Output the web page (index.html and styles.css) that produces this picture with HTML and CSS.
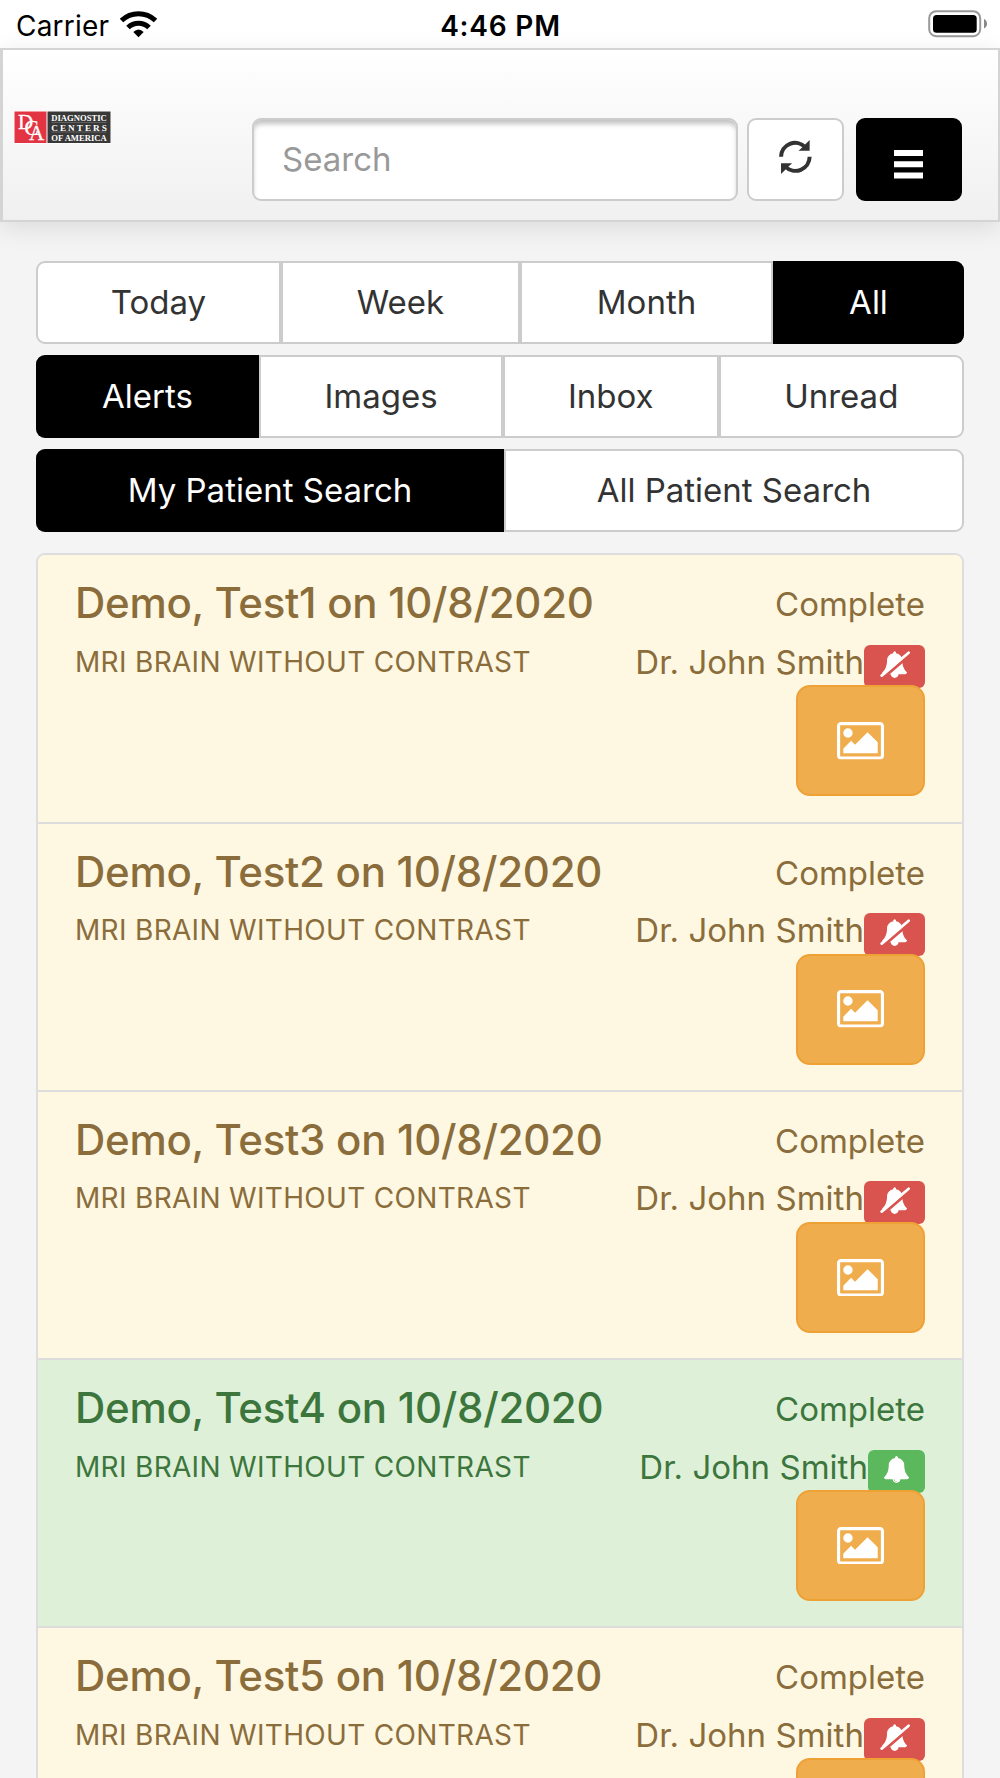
FILE: index.html
```html
<!DOCTYPE html>
<html lang="en">
<head>
<meta charset="utf-8">
<title>Patient Results</title>
<link rel="stylesheet" href="styles.css">
</head>
<body>
<svg class="sprite" aria-hidden="true">
  <symbol id="bell" viewBox="0 0 1792 1792"><path d="M912 1696q0-16-16-16-59 0-101.5-42.5t-42.5-101.5q0-16-16-16t-16 16q0 73 51.5 124.5t124.5 51.5q16 0 16-16zm816-288q0 52-38 90t-90 38h-448q0 106-75 181t-181 75-181-75-75-181h-448q-52 0-90-38t-38-90q50-42 91-88t85-119.5 74.5-158.5 50-206 19.5-260q0-152 117-282.5t307-158.5q-8-19-8-39 0-40 28-68t68-28 68 28 28 68q0 20-8 39 190 28 307 158.5t117 282.5q0 139 19.5 260t50 206 74.5 158.5 85 119.5 91 88z"/></symbol>
  <symbol id="image" viewBox="-64 128 1920 1536"><path d="M576 576q0 80-56 136t-136 56-136-56-56-136 56-136 136-56 136 56 56 136zm1024 384v448h-1408v-192l320-320 160 160 512-512zm96-704h-1600q-13 0-22.5 9.5t-9.5 22.5v1216q0 13 9.5 22.5t22.5 9.5h1600q13 0 22.5-9.5t9.5-22.5v-1216q0-13-9.5-22.5t-22.5-9.5zm160 32v1216q0 66-47 113t-113 47h-1600q-66 0-113-47t-47-113v-1216q0-66 47-113t113-47h1600q66 0 113 47t47 113z"/></symbol>
  <symbol id="bell-off" viewBox="0 0 90 82">
    <path transform="translate(4 1) scale(.0446)" d="M1728 1408q0 52-38 90t-90 38h-448q0 106-75 181t-181 75-181-75-75-181h-448q-52 0-90-38t-38-90q50-42 91-88t85-119.5 74.5-158.5 50-206 19.5-260q0-152 117-282.5t307-158.5q-8-19-8-39 0-40 28-68t68-28 68 28 28 68q0 20-8 39 190 28 307 158.5t117 282.5q0 139 19.5 260t50 206 74.5 158.5 85 119.5 91 88z"/>
    <path class="cut" d="M8 82 94 8"/>
    <path class="slash" d="M5 74 86 5"/>
  </symbol>
</svg>

<div class="status">
  <div class="carrier">Carrier
    <svg width="37" height="28" viewBox="0 0 37 28"><g fill="none" stroke="#000" stroke-width="5"><path d="M1.5 10.5a24.5 24.5 0 0 1 34 0"/><path d="M8 17.5a14.8 14.8 0 0 1 21 0"/></g><path d="M13.3 22q5.2-5 10.4 0l-5.2 5.2z"/></svg>
  </div>
  <div class="clock">4:46 PM</div>
  <svg class="battery" width="60" height="28" viewBox="0 0 60 28"><rect x="1.2" y="1.2" width="51" height="25" rx="7" fill="#fff" stroke="#999" stroke-width="2"/><rect x="5" y="5" width="43.7" height="17.8" rx="3.5"/><path d="M56 9q3 1.500 3 4.700t-3 4.700z" fill="#888"/></svg>
</div>

<header class="topbar">
  <svg class="logo" width="97" height="33" viewBox="0 0 97 33">
    <rect width="97" height="33" fill="#fff"/>
    <rect x=".5" y=".5" width="32" height="31.500" fill="#e23443"/>
    <rect x="33.500" y=".5" width="63" height="31.500" fill="#383838"/>
    <g class="logo-mark"><text x="4" y="18">D</text><text x="10.500" y="23.500">C</text><text x="15" y="28.500">A</text></g>
    <g class="logo-name"><text x="37.300" y="9.700" textLength="55.500" lengthAdjust="spacingAndGlyphs">DIAGNOSTIC</text><text x="37.300" y="19.500" textLength="55.500">CENTERS</text><text x="37.300" y="29.500" textLength="55.500" lengthAdjust="spacingAndGlyphs">OF AMERICA</text></g>
    <path d="M37.500 11.500h55M37.500 21h55" stroke="#888" stroke-width=".5"/>
  </svg>
  <input class="search" type="text" placeholder="Search">
  <button class="refresh" aria-label="Refresh"><svg width="33" height="34" viewBox="0 0 98 101"><g fill="none" stroke="#333" stroke-width="12"><path d="M6 50A42 42 0 0 1 78 21"/><path d="M91 50A42 42 0 0 1 19 79"/></g><path fill="#333" d="M91 0v32H58l10-9zM6 101V69h33L29 78z"/></svg></button>
  <button class="menu" aria-label="Menu"><svg width="29" height="29" viewBox="0 0 29 29"><path fill="#fff" d="M0 0h29v6H0zM0 11.200h29v6H0zM0 22.500h29v6H0z"/></svg></button>
</header>

<main>
  <nav class="group period"><button>Today</button><button>Week</button><button>Month</button><button class="on">All</button></nav>
  <nav class="group kind"><button class="on">Alerts</button><button>Images</button><button>Inbox</button><button>Unread</button></nav>
  <nav class="group scope"><button class="on">My Patient Search</button><button>All Patient Search</button></nav>

  <ul class="results">
    <li class="result">
      <div><h2>Demo, Test1 on 10/8/2020</h2><p class="exam">MRI BRAIN WITHOUT CONTRAST</p></div>
      <div class="side"><span class="state">Complete</span><div class="doctor">Dr. John Smith<span class="badge"><svg width="30" height="27.300"><use href="#bell-off"/></svg></span></div><button class="view" aria-label="View images"><svg width="47" height="37.600"><use href="#image"/></svg></button></div>
    </li>
    <li class="result">
      <div><h2>Demo, Test2 on 10/8/2020</h2><p class="exam">MRI BRAIN WITHOUT CONTRAST</p></div>
      <div class="side"><span class="state">Complete</span><div class="doctor">Dr. John Smith<span class="badge"><svg width="30" height="27.300"><use href="#bell-off"/></svg></span></div><button class="view" aria-label="View images"><svg width="47" height="37.600"><use href="#image"/></svg></button></div>
    </li>
    <li class="result">
      <div><h2>Demo, Test3 on 10/8/2020</h2><p class="exam">MRI BRAIN WITHOUT CONTRAST</p></div>
      <div class="side"><span class="state">Complete</span><div class="doctor">Dr. John Smith<span class="badge"><svg width="30" height="27.300"><use href="#bell-off"/></svg></span></div><button class="view" aria-label="View images"><svg width="47" height="37.600"><use href="#image"/></svg></button></div>
    </li>
    <li class="result read">
      <div><h2>Demo, Test4 on 10/8/2020</h2><p class="exam">MRI BRAIN WITHOUT CONTRAST</p></div>
      <div class="side"><span class="state">Complete</span><div class="doctor">Dr. John Smith<span class="badge"><svg width="27" height="27"><use href="#bell"/></svg></span></div><button class="view" aria-label="View images"><svg width="47" height="37.600"><use href="#image"/></svg></button></div>
    </li>
    <li class="result">
      <div><h2>Demo, Test5 on 10/8/2020</h2><p class="exam">MRI BRAIN WITHOUT CONTRAST</p></div>
      <div class="side"><span class="state">Complete</span><div class="doctor">Dr. John Smith<span class="badge"><svg width="30" height="27.300"><use href="#bell-off"/></svg></span></div><button class="view" aria-label="View images"><svg width="47" height="37.600"><use href="#image"/></svg></button></div>
    </li>
  </ul>
</main>
</body>
</html>
```

FILE: styles.css
```css
* { box-sizing: border-box; }
html { height: 1778px; overflow: hidden; }
body { margin: 0; height: 1778px; overflow: hidden; background: #f4f4f4; color: #333; font: 33px/40px Inter, sans-serif; display: flex; flex-direction: column; }
button, input { font: inherit; color: inherit; margin: 0; }
h2, p, ul { margin: 0; padding: 0; font: inherit; list-style: none; }
svg { display: block; flex: none; }
.sprite { display: none; }

.status { flex: none; height: 48px; padding: 3px 12px 0 16px; background: #fff; color: #000; display: grid; grid-template-columns: 1fr auto 1fr; font-size: 28px; line-height: 46px; }
.carrier { display: flex; gap: 11px; letter-spacing: .2px; }
.carrier svg { margin-top: 7px; }
.clock { font-weight: 600; letter-spacing: .8px; margin-right: 3px; }
.battery { justify-self: end; margin-top: 7px; }

.topbar { flex: none; height: 174px; border: 2px solid #d4d4d4; border-left-width: 3px; background: linear-gradient(#fff, #f0f0f0); box-shadow: 0 6px 24px rgba(0, 0, 0, .1); display: flex; align-items: flex-start; padding: 61px 36px 0 11px; }
.logo { margin-right: 1px; }
.logo-mark { font: 21px "Liberation Serif", serif; fill: #fff; stroke: #fff; stroke-width: .3; }
.logo-name { font: bold 9.200px "Liberation Serif", serif; fill: #fff; }
.search, .refresh, .menu { height: 83px; margin-top: 7px; border: 2px solid #ccc; border-radius: 9px; background: #fff; }
.search { width: 486px; margin-left: 140px; padding: 0 28px 1px; box-shadow: inset 0 5px 5px -1px rgba(0, 0, 0, .24); }
.search::placeholder { color: #999; opacity: 1; }
.refresh, .menu { display: flex; align-items: flex-start; justify-content: center; }
.refresh { width: 97px; margin-left: 9px; padding: 20px 0 0; }
.menu { width: 107px; margin-left: 12px; padding: 30px 0 0; background: #000; border-color: #000; }

main { flex: 1; min-height: 0; overflow: hidden; padding: 38.500px 36px 0; }
.group { display: grid; height: 83px; margin-bottom: 11.200px; border: 2px solid #ccc; border-radius: 9px; background: #fff; }
.group button { border: 0; border-right: 4px solid #ccc; background: none; padding: 0; }
.group button:last-child { border-right: 0; }
.group button.on { background: #000; color: #fff; margin: -2px 0; border: 0; }
.period { grid-template-columns: 245px 239px 251px 1fr; margin-bottom: 11px; }
.period button:nth-child(3) { border-right-width: 2px; }
.group .on:last-child { margin-right: -2px; border-radius: 0 9px 9px 0; }
.kind { grid-template-columns: 221px 246px 215.500px 1fr; }
.scope { grid-template-columns: 466px 1fr; }
.group .on:first-child { margin-left: -2px; border-radius: 9px 0 0 9px; }
.group .on + button { border-left: 2px solid #ccc; }

.results { margin-top: 21.800px; border: 2px solid #ddd; border-bottom: 0; border-radius: 9px 9px 0 0; overflow: hidden; }
.result { height: 268.200px; border-bottom: 2.500px solid #ddd; padding: 25px 37px 0; display: flex; justify-content: space-between; background: #fef8e3; color: #8a6d3b; }
.result h2 { font-size: 42px; font-weight: 500; line-height: 46px; letter-spacing: -.28px; }
.exam { font-size: 28px; line-height: 34px; margin-top: 18.500px; letter-spacing: .32px; }
.side { display: flex; flex-direction: column; align-items: flex-end; padding-top: 4px; }
.doctor { display: flex; height: 43px; margin-top: 20.500px; line-height: 35px; letter-spacing: .03px; }
.badge { width: 61px; height: 43px; border-radius: 6px; background: #d9534f; display: flex; justify-content: center; padding-top: 6px; fill: #fff; }
.cut { stroke: #d9534f; stroke-width: 9; }
.slash { stroke: #fff; stroke-width: 8; stroke-linecap: round; }
.view { width: 129px; height: 111px; margin-top: -2.500px; border: 2px solid #eea236; border-radius: 14px; background: #f0ad4e; fill: #fff; padding: 0; display: flex; align-items: center; justify-content: center; }
.read { background: #dff0d8; color: #3c763d; }
.read .badge { width: 57px; background: #5cb85c; }
```
